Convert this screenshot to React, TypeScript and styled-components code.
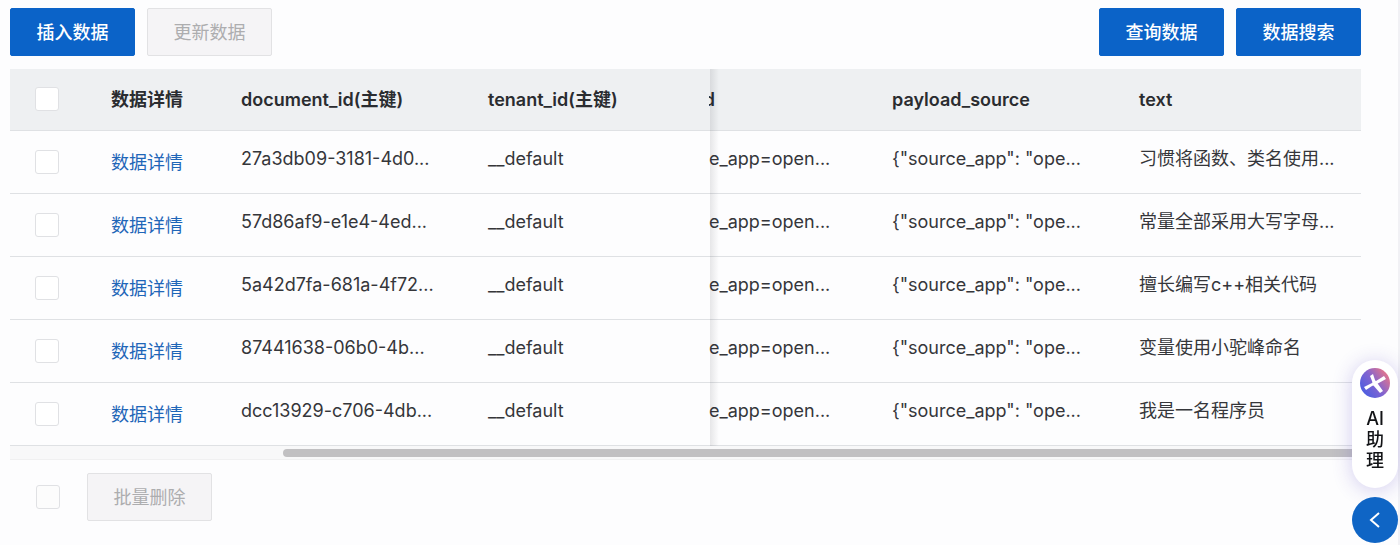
import React from "react";
import styled, { createGlobalStyle } from "styled-components";

const GlobalStyle = createGlobalStyle`
  * { box-sizing: border-box; }
  body {
    margin: 0;
    background: #fdfdfe;
    color: #35363a;
    font-family: Inter, "Noto Sans CJK SC", sans-serif;
    font-optical-sizing: none;
    font-size: 18px;
    line-height: 26px;
  }
`;

const Page = styled.main`
  min-height: 100vh;
  padding: 8px 37px 24px 10px;
  border-right: 2px solid #f1f1f5;
`;

const Bar = styled.div`
  display: flex;
  align-items: center;
  gap: 12px;
  margin-bottom: 13px;
`;

const Spacer = styled.div`
  flex: 1;
`;

const Button = styled.button<{ $primary?: boolean }>`
  width: 125px;
  height: 48px;
  padding: 2px 0 0;
  border: 1px solid ${(p) => (p.$primary ? "#0b63c8" : "#e2e2e4")};
  border-radius: 2px;
  background: ${(p) => (p.$primary ? "#0b63c8" : "#f5f4f6")};
  color: ${(p) => (p.$primary ? "#ffffff" : "#adadaf")};
  font: inherit;
  font-weight: ${(p) => (p.$primary ? 500 : 400)};
`;

const Check = styled.input`
  appearance: none;
  display: block;
  width: 24px;
  height: 24px;
  margin: 0;
  border: 1px solid #e0e1e4;
  border-radius: 3px;
  background: #ffffff;
  &:disabled { background: #fcfcfc; }
`;

const TableFrame = styled.div`
  position: relative;
`;

const Table = styled.table`
  width: 100%;
  table-layout: fixed;
  border-collapse: separate;
  border-spacing: 0;
`;

const Col = styled.col<{ $w?: number }>`
  width: ${(p) => (p.$w ? `${p.$w}px` : "auto")};
`;

const Head = styled.th<{ $pad?: number; $bottom?: number }>`
  height: 62px;
  padding: 0 0 ${(p) => p.$bottom ?? 0}px ${(p) => p.$pad ?? 20}px;
  border-bottom: 1px solid #dfe1e4;
  background: #eef0f2;
  color: #2a2c30;
  font-weight: 600;
  text-align: left;
  white-space: nowrap;
`;

const Cell = styled.td<{ $pad?: number; $top?: number; $bottom?: number }>`
  height: 63px;
  padding: ${(p) => p.$top ?? 0}px 0 ${(p) => p.$bottom ?? 0}px ${(p) => p.$pad ?? 20}px;
  border-bottom: 1px solid #dfe1e4;
  white-space: nowrap;
`;

const DetailLink = styled.a`
  color: #1f66b8;
  text-decoration: none;
`;

const Clipped = styled.span`
  display: flex;
  justify-content: flex-end;
  width: 6px;
  overflow: hidden;
`;

const PinShadow = styled.div`
  position: absolute;
  top: 0;
  bottom: 0;
  left: 700px;
  width: 9px;
  background: linear-gradient(to right, rgba(30, 30, 40, 0.1), rgba(30, 30, 40, 0));
  pointer-events: none;
`;

const ScrollTrack = styled.div`
  height: 14px;
  padding: 3px 0 3px 273px;
  border-bottom: 1px solid #f0f0f1;
  background: #f8f8f9;
`;

const ScrollThumb = styled.div`
  height: 8px;
  border-radius: 4px;
  background: #c1c0c2;
`;

const Footer = styled.div`
  display: flex;
  align-items: center;
  gap: 27px;
  margin-top: 13px;
  padding-left: 26px;
`;

const Dock = styled.aside`
  position: fixed;
  right: 2px;
  bottom: 2px;
  display: flex;
  flex-direction: column;
  gap: 9px;
  width: 46px;
`;

const Assistant = styled.button`
  display: flex;
  flex-direction: column;
  align-items: center;
  gap: 10px;
  height: 128px;
  padding: 8px 0 0;
  border: 0;
  border-radius: 23px;
  background: #ffffff;
  box-shadow: 0 2px 20px rgba(70, 50, 190, 0.24);
  color: #121316;
  font: inherit;
  font-weight: 500;
  line-height: 21px;
`;

const AssistantLabel = styled.span`
  width: 20px;
  text-align: center;
`;

const Expand = styled.button`
  display: grid;
  place-items: center;
  height: 46px;
  padding: 0;
  border: 0;
  border-radius: 50%;
  background: #0f65c5;
`;

const rows = [
  { id: "27a3db09-3181-4d0...", text: "习惯将函数、类名使用..." },
  { id: "57d86af9-e1e4-4ed...", text: "常量全部采用大写字母..." },
  { id: "5a42d7fa-681a-4f72...", text: "擅长编写c++相关代码" },
  { id: "87441638-06b0-4b...", text: "变量使用小驼峰命名" },
  { id: "dcc13929-c706-4db...", text: "我是一名程序员" },
];

function AssistantLogo() {
  return (
    <svg width="30" height="30" viewBox="0 0 30 30" aria-hidden="true">
      <defs>
        <linearGradient id="logo" x1="0.1" y1="0.8" x2="0.9" y2="0.2">
          <stop offset="0" stopColor="#4f5ee0" />
          <stop offset="0.5" stopColor="#8264d0" />
          <stop offset="1" stopColor="#e0748f" />
        </linearGradient>
      </defs>
      <circle cx="15" cy="15" r="15" fill="url(#logo)" />
      <path d="M10 8L13 6L15 12L18 16L23 23L20 25L13 17L12 13Z" fill="#fff" />
      <path d="M24 8L26 11L17 16L12 18L6 22L4 19L12 15L16 13Z" fill="#fff" />
    </svg>
  );
}

export default function App() {
  return (
    <>
      <GlobalStyle />
      <Page>
        <Bar>
          <Button $primary>插入数据</Button>
          <Button disabled>更新数据</Button>
          <Spacer />
          <Button $primary>查询数据</Button>
          <Button $primary>数据搜索</Button>
        </Bar>
        <TableFrame>
          <Table>
            <colgroup>
              <Col $w={81} />
              <Col $w={130} />
              <Col $w={247} />
              <Col $w={241} />
              <Col $w={163} />
              <Col $w={247} />
              <Col />
            </colgroup>
            <thead>
              <tr>
                <Head $pad={25} $bottom={2}><Check type="checkbox" aria-label="全选" /></Head>
                <Head>数据详情</Head>
                <Head>document_id(主键)</Head>
                <Head>tenant_id(主键)</Head>
                <Head $pad={0}><Clipped>d</Clipped></Head>
                <Head>payload_source</Head>
                <Head>text</Head>
              </tr>
            </thead>
            <tbody>
              {rows.map((row) => (
                <tr key={row.id}>
                  <Cell $pad={25}><Check type="checkbox" aria-label={row.id} /></Cell>
                  <Cell $top={2}><DetailLink href="#">数据详情</DetailLink></Cell>
                  <Cell $bottom={6}>{row.id}</Cell>
                  <Cell $bottom={6}>__default</Cell>
                  <Cell $bottom={6} $pad={0}>e_app=open...</Cell>
                  <Cell $bottom={6}>{'{"source_app": "ope...'}</Cell>
                  <Cell $bottom={6}>{row.text}</Cell>
                </tr>
              ))}
            </tbody>
          </Table>
          <PinShadow />
        </TableFrame>
        <ScrollTrack><ScrollThumb /></ScrollTrack>
        <Footer>
          <Check type="checkbox" aria-label="选择全部数据" disabled />
          <Button disabled>批量删除</Button>
        </Footer>
      </Page>
      <Dock>
        <Assistant>
          <AssistantLogo />
          <AssistantLabel>AI 助理</AssistantLabel>
        </Assistant>
        <Expand aria-label="展开">
          <svg width="16" height="16" viewBox="0 0 16 16" fill="none" stroke="#fff" strokeWidth="2" aria-hidden="true">
            <path d="M12 1L4 8L12 15" />
          </svg>
        </Expand>
      </Dock>
    </>
  );
}
